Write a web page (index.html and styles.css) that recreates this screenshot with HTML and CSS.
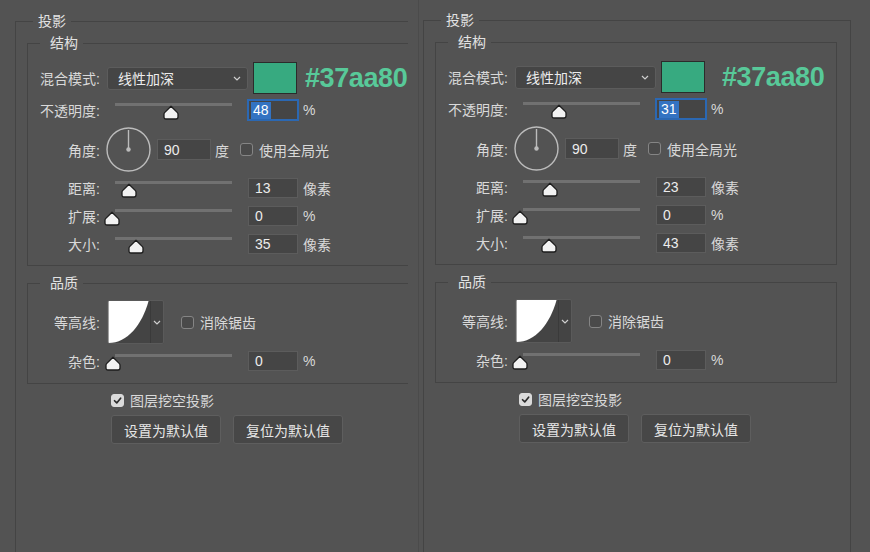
FILE: index.html
```html
<!DOCTYPE html>
<html lang="zh-CN">

<head>
  <meta charset="UTF-8" />
  <meta name="viewport" content="width=device-width, initial-scale=1.0" />
  <title>投影 - 图层样式</title>
  <link rel="stylesheet" href="styles.css">
</head>

<body>
  <svg class="defs" width="0" height="0" aria-hidden="true">
    <symbol id="thumb" viewBox="0 0 16 15">
      <path d="M8 1.2 L14.4 7.6 Q15 8.2 15 9.2 L15 12 Q15 14 13 14 L3 14 Q1 14 1 12 L1 9.2 Q1 8.2 1.6 7.6 Z"
        fill="#f2f2f2" stroke="#1c1c1c" stroke-width="1.3" stroke-linejoin="round" />
    </symbol>
    <symbol id="chevron" viewBox="0 0 8 5">
      <polyline points="1,1 4,4 7,1" fill="none" stroke="currentColor" stroke-width="1.2" />
    </symbol>
    <symbol id="check" viewBox="0 0 13 13">
      <polyline points="3,6.8 5.6,9.4 10.2,3.8" fill="none" stroke="#2b2b2b" stroke-width="2" stroke-linecap="round"
        stroke-linejoin="round" />
    </symbol>
  </svg>

  <div class="screen">
    <!-- left copy: opacity 48 / size 35 -->
    <div class="pane pane-left">
      <div class="dialog">
        <fieldset class="group group-main">
          <legend>投影</legend>
          <fieldset class="group group-sub">
            <legend>结构</legend>
            <div class="row row-blend">
              <span class="label">混合模式:</span>
              <div class="select"><span>线性加深</span><svg class="chev"><use href="#chevron" /></svg></div>
              <span class="swatch"></span>
              <span class="hex">#37aa80</span>
            </div>
            <div class="row row-slider row-opacity">
              <span class="label">不透明度:</span>
              <div class="slider"><svg class="thumb" style="left:51px"><use href="#thumb" /></svg></div>
              <span class="field field-focus"><span class="sel">48</span></span>
              <span class="unit">%</span>
            </div>
            <div class="row row-angle">
              <span class="label">角度:</span>
              <svg class="dial" viewBox="0 0 45 45">
                <circle cx="22.5" cy="22.5" r="21.5" />
                <line x1="22.5" y1="22.5" x2="22.5" y2="3" />
                <circle class="hub" cx="22.5" cy="22.5" r="2.2" />
              </svg>
              <span class="field field-angle">90</span>
              <span class="unit">度</span>
              <span class="checkbox"></span>
              <span class="check-label">使用全局光</span>
            </div>
            <div class="row row-slider">
              <span class="label">距离:</span>
              <div class="slider"><svg class="thumb" style="left:9px"><use href="#thumb" /></svg></div>
              <span class="field">13</span>
              <span class="unit">像素</span>
            </div>
            <div class="row row-slider">
              <span class="label">扩展:</span>
              <div class="slider"><svg class="thumb" style="left:-8px"><use href="#thumb" /></svg></div>
              <span class="field">0</span>
              <span class="unit">%</span>
            </div>
            <div class="row row-slider">
              <span class="label">大小:</span>
              <div class="slider"><svg class="thumb" style="left:16px"><use href="#thumb" /></svg></div>
              <span class="field">35</span>
              <span class="unit">像素</span>
            </div>
          </fieldset>

          <fieldset class="group group-sub group-quality">
            <legend>品质</legend>
            <div class="row row-contour">
              <span class="label">等高线:</span>
              <div class="contour">
                <svg class="curve" viewBox="0 0 43 44">
                  <path d="M0 0 L42 0 C35 25 20 44 0 44 Z" />
                </svg>
                <span class="contour-drop"><svg class="chev"><use href="#chevron" /></svg></span>
              </div>
              <span class="checkbox"></span>
              <span class="check-label">消除锯齿</span>
            </div>
            <div class="row row-slider">
              <span class="label">杂色:</span>
              <div class="slider"><svg class="thumb" style="left:-7px"><use href="#thumb" /></svg></div>
              <span class="field">0</span>
              <span class="unit">%</span>
            </div>
          </fieldset>

          <div class="knockout">
            <span class="checkbox checked"><svg><use href="#check" /></svg></span>
            <span class="check-label">图层挖空投影</span>
          </div>
          <div class="buttons">
            <button type="button">设置为默认值</button>
            <button type="button">复位为默认值</button>
          </div>
        </fieldset>
      </div>
    </div>

    <!-- right copy: opacity 31 / size 43 -->
    <div class="pane pane-right">
      <div class="dialog">
        <fieldset class="group group-main">
          <legend>投影</legend>
          <fieldset class="group group-sub">
            <legend>结构</legend>
            <div class="row row-blend">
              <span class="label">混合模式:</span>
              <div class="select"><span>线性加深</span><svg class="chev"><use href="#chevron" /></svg></div>
              <span class="swatch"></span>
              <span class="hex hex-wide">#37aa80</span>
            </div>
            <div class="row row-slider row-opacity">
              <span class="label">不透明度:</span>
              <div class="slider"><svg class="thumb" style="left:31px"><use href="#thumb" /></svg></div>
              <span class="field field-focus"><span class="sel">31</span></span>
              <span class="unit">%</span>
            </div>
            <div class="row row-angle">
              <span class="label">角度:</span>
              <svg class="dial" viewBox="0 0 45 45">
                <circle cx="22.5" cy="22.5" r="21.5" />
                <line x1="22.5" y1="22.5" x2="22.5" y2="3" />
                <circle class="hub" cx="22.5" cy="22.5" r="2.2" />
              </svg>
              <span class="field field-angle">90</span>
              <span class="unit">度</span>
              <span class="checkbox"></span>
              <span class="check-label">使用全局光</span>
            </div>
            <div class="row row-slider">
              <span class="label">距离:</span>
              <div class="slider"><svg class="thumb" style="left:22px"><use href="#thumb" /></svg></div>
              <span class="field">23</span>
              <span class="unit">像素</span>
            </div>
            <div class="row row-slider">
              <span class="label">扩展:</span>
              <div class="slider"><svg class="thumb" style="left:-8px"><use href="#thumb" /></svg></div>
              <span class="field">0</span>
              <span class="unit">%</span>
            </div>
            <div class="row row-slider">
              <span class="label">大小:</span>
              <div class="slider"><svg class="thumb" style="left:21px"><use href="#thumb" /></svg></div>
              <span class="field">43</span>
              <span class="unit">像素</span>
            </div>
          </fieldset>

          <fieldset class="group group-sub group-quality">
            <legend>品质</legend>
            <div class="row row-contour">
              <span class="label">等高线:</span>
              <div class="contour">
                <svg class="curve" viewBox="0 0 43 44">
                  <path d="M0 0 L42 0 C35 25 20 44 0 44 Z" />
                </svg>
                <span class="contour-drop"><svg class="chev"><use href="#chevron" /></svg></span>
              </div>
              <span class="checkbox"></span>
              <span class="check-label">消除锯齿</span>
            </div>
            <div class="row row-slider">
              <span class="label">杂色:</span>
              <div class="slider"><svg class="thumb" style="left:-8px"><use href="#thumb" /></svg></div>
              <span class="field">0</span>
              <span class="unit">%</span>
            </div>
          </fieldset>

          <div class="knockout">
            <span class="checkbox checked"><svg><use href="#check" /></svg></span>
            <span class="check-label">图层挖空投影</span>
          </div>
          <div class="buttons">
            <button type="button">设置为默认值</button>
            <button type="button">复位为默认值</button>
          </div>
        </fieldset>
      </div>
    </div>
  </div>
</body>

</html>
```

FILE: styles.css
```css
*,
::before,
::after {
  box-sizing: border-box;
}

html {
  font-family: 'Liberation Sans', 'Noto Sans CJK SC', sans-serif;
  font-size: 14px;
}

body {
  margin: 0;
  background: #535353;
  color: #d9d9d9;
  overflow: hidden;
}

.defs {
  position: absolute;
}

.screen {
  display: flex;
  height: 552px;
  overflow: hidden;
}

/* panes */
.pane {
  overflow: hidden;
}

.pane-left {
  flex: none;
  width: 408px;
}

.pane-right {
  flex: 1;
  background: linear-gradient(to right, transparent 10px, #4b4b4b 10px, #4b4b4b 11px, transparent 11px);
}

.dialog {
  width: 443px;
  padding: 11px 0 0 15px;
}

.pane-right .dialog {
  padding-top: 10px;
}

/* group boxes */
.group {
  margin: 0;
  min-width: 0;
  border: 1px solid #444;
}

.group legend {
  line-height: 20px;
  color: #e2e2e2;
}

.group-main {
  min-height: 600px;
  border-bottom: none;
  padding: 0 13px 0 11px;
}

.group-main > legend {
  margin-left: 6px;
  padding: 0 5px;
}

.group-sub {
  margin-top: 2px;
  padding: 9px 0 10px;
}

.group-sub > legend {
  margin-left: 12px;
  padding: 0 5px 0 10px;
}

.group-quality {
  margin-top: 7px;
  padding: 7px 0 11px;
}

/* rows */
.row {
  display: flex;
  align-items: center;
}

.label {
  flex: none;
  width: 72px;
  text-align: right;
  white-space: nowrap;
}

.row-blend {
  height: 32px;
}

.row-opacity {
  margin-top: 5px;
}

.row-angle {
  height: 45px;
  margin-top: 6px;
}

.row-slider {
  height: 22px;
  margin-top: 6px;
}

.row-opacity,
.row-angle + .row-slider {
  margin-top: 5px;
}

.row-contour {
  height: 44px;
}

/* blend mode select + colour */
.select {
  display: flex;
  align-items: center;
  justify-content: space-between;
  width: 141px;
  height: 23px;
  margin-left: 7px;
  padding: 0 6px 0 10px;
  background: #454545;
  border: 1px solid #5c5c5c;
  border-radius: 3px;
  color: #ececec;
}

.chev {
  width: 8px;
  height: 5px;
  color: #cfcfcf;
}

.swatch {
  flex: none;
  width: 44px;
  height: 32px;
  margin-left: 5px;
  background: #37aa80;
  border: 1px solid #2b2b2b;
}

.hex {
  margin-left: 8px;
  font-family: 'Liberation Sans', sans-serif;
  font-weight: bold;
  font-size: 27px;
  letter-spacing: -0.4px;
  color: #58c999;
  white-space: nowrap;
}

.hex-wide {
  margin-left: 17px;
}

/* sliders */
.slider {
  position: relative;
  flex: none;
  align-self: stretch;
  width: 120px;
  margin-left: 12px;
}

.slider::before {
  content: '';
  display: block;
  margin: 4px 0 0 3px;
  height: 3px;
  background: #717171;
}

.thumb {
  position: absolute;
  top: 6px;
  width: 16px;
  height: 15px;
}

/* number fields */
.field {
  display: flex;
  align-items: center;
  flex: none;
  width: 50px;
  height: 20px;
  margin-left: 16px;
  padding-left: 6px;
  background: #454545;
  border: 1px solid #5c5c5c;
  color: #ececec;
}

.field-focus {
  padding-left: 2px;
  border-color: #2b68b3;
  box-shadow: 0 0 0 1px #2b68b3;
}

.sel {
  padding: 0 2px 0 2px;
  background: #3373c2;
  color: #fff;
  line-height: 17px;
}

.field-angle {
  width: 54px;
  height: 21px;
  margin-left: 6px;
}

.unit {
  margin-left: 5px;
  white-space: nowrap;
}

.row-angle .unit {
  margin-left: 4px;
}

/* angle dial */
.dial {
  flex: none;
  width: 45px;
  height: 45px;
  margin-left: 6px;
  fill: none;
  stroke: #bcbcbc;
  stroke-width: 1.4;
}

.dial .hub {
  fill: #bcbcbc;
  stroke: none;
}

/* checkboxes */
.checkbox {
  flex: none;
  width: 13px;
  height: 13px;
  margin-left: 11px;
  background: #4a4a4a;
  border: 1px solid #858585;
  border-radius: 3px;
}

.checkbox svg {
  display: block;
  width: 100%;
  height: 100%;
}

.checkbox.checked {
  margin-left: 0;
  background: #dadada;
  border-color: #dadada;
}

.check-label {
  margin-left: 6px;
  white-space: nowrap;
}

/* contour preview */
.contour {
  display: flex;
  width: 57px;
  height: 44px;
  margin-left: 7px;
  background: #444;
  border: 1px solid #5a5a5a;
  border-radius: 2px;
  overflow: hidden;
}

.curve {
  flex: none;
  width: 42px;
  height: 42px;
  fill: #fff;
}

.contour-drop {
  display: flex;
  align-items: center;
  justify-content: center;
  flex: 1;
  border-left: 1px solid #3a3a3a;
}

.row-contour .checkbox {
  margin-left: 17px;
}

/* bottom */
.knockout {
  display: flex;
  align-items: center;
  height: 20px;
  margin: 6px 0 0 84px;
}

.buttons {
  display: flex;
  gap: 12px;
  margin: 5px 0 0 84px;
}

.buttons button {
  width: 110px;
  height: 29px;
  padding: 0;
  font: inherit;
  color: #e6e6e6;
  background: #474747;
  border: 1px solid #5e5e5e;
  border-radius: 3px;
}
```
